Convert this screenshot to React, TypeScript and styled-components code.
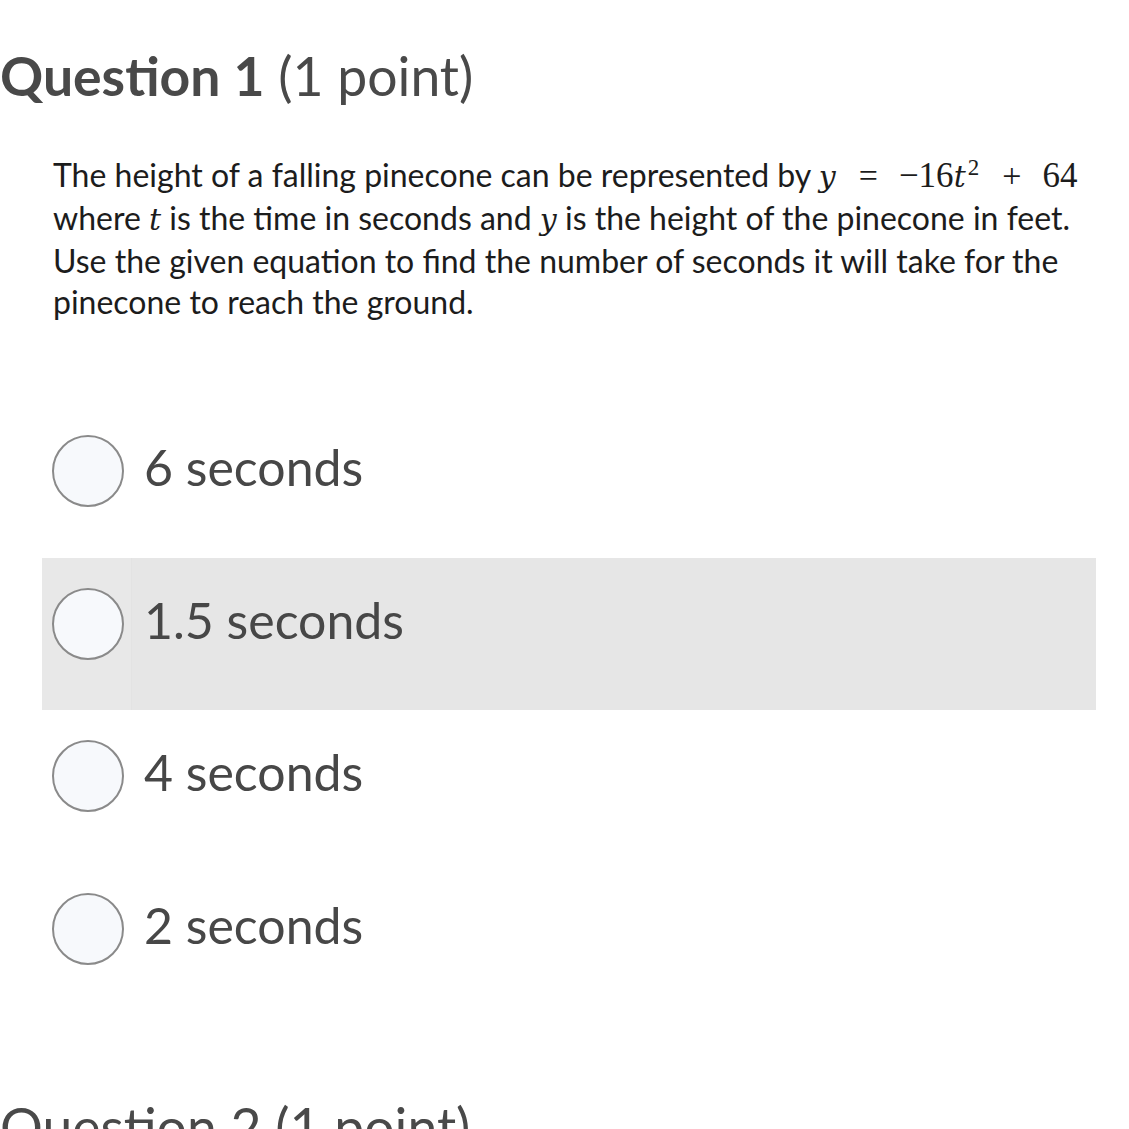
import React from "react";
import styled, { createGlobalStyle } from "styled-components";

const Global = createGlobalStyle`
  html, body { margin: 0; padding: 0; background: #ffffff; }
  body { overflow: hidden; }
`;

const Page = styled.div`
  width: 1129px;
  height: 1129px;
  overflow: hidden;
  background: #fff;
  font-family: Lato, "Open Sans", sans-serif;
`;

const Heading = styled.h2<{ $top: number }>`
  margin: ${(p) => p.$top}px 0 0 0;
  font-family: Lato, sans-serif;
  font-size: 53.5px;
  line-height: 62px;
  color: #494949;
  font-weight: 400;
  white-space: nowrap;
  b { font-weight: 700; }
`;

const Prompt = styled.div`
  margin: 48px 0 0 53px;
  font-family: Lato, sans-serif;
  font-size: 32px;
  line-height: 41px;
  color: #1c1c1c;
`;

const Line = styled.div`
  white-space: nowrap;
`;

const M = styled.span`
  font-family: "DejaVu Serif", "Liberation Serif", serif;
  font-style: italic;
  font-size: 30px;
`;

const Op = styled.span`
  font-family: "Liberation Serif", serif;
  font-size: 34px;
  margin: 0 21px 0 23px;
`;

const Num = styled.span`
  font-family: "Liberation Serif", serif;
  font-size: 35px;
`;

const Sup = styled.sup`
  font-family: "Liberation Serif", serif;
  font-size: 23px;
  font-style: normal;
  line-height: 0;
  margin-left: 2px;
`;

const Options = styled.div`
  margin-top: 83px;
  display: flex;
  flex-direction: column;
`;

const Row = styled.label<{ $hover?: boolean }>`
  display: flex;
  align-items: flex-start;
  height: 152.5px;
  margin-left: 42px;
  width: 1054px;
  box-sizing: border-box;
  padding: 30px 0 0 10px;
  background: ${(p) =>
    p.$hover
      ? "linear-gradient(to right, #e8e8e8 0 89px, #e3e3e3 89px 90px, #e6e6e6 90px)"
      : "transparent"};
`;

const Radio = styled.span`
  width: 68px;
  height: 68px;
  border-radius: 50%;
  border: 2.5px solid #8a8a8a;
  background: #f7f9fc;
  flex: none;
`;

const Label = styled.span`
  margin-left: 20px;
  font-family: Lato, sans-serif;
  font-size: 50px;
  line-height: 68px;
  color: #474747;
  position: relative;
  top: -2px;
`;

const options = ["6 seconds", "1.5 seconds", "4 seconds", "2 seconds"];

export default function App() {
  return (
    <Page>
      <Global />
      <Heading $top={44}>
        <b>Question 1</b> (1 point)
      </Heading>
      <Prompt>
        <Line>
          The height of a falling pinecone can be represented by <M>y</M>
          <Op>=</Op>
          <Num>−16</Num>
          <M>t</M>
          <Sup>2</Sup>
          <Op>+</Op>
          <Num>64</Num>
        </Line>
        <Line>
          where <M>t</M> is the time in seconds and <M>y</M> is the height of the
          pinecone in feet.
        </Line>
        <Line>
          Use the given equation to find the number of seconds it will take for the
        </Line>
        <Line>pinecone to reach the ground.</Line>
      </Prompt>
      <Options>
        {options.map((o, i) => (
          <Row key={o} $hover={i === 1}>
            <Radio />
            <Label>{o}</Label>
          </Row>
        ))}
      </Options>
      <Heading $top={80}>Question 2 (1 point)</Heading>
    </Page>
  );
}
